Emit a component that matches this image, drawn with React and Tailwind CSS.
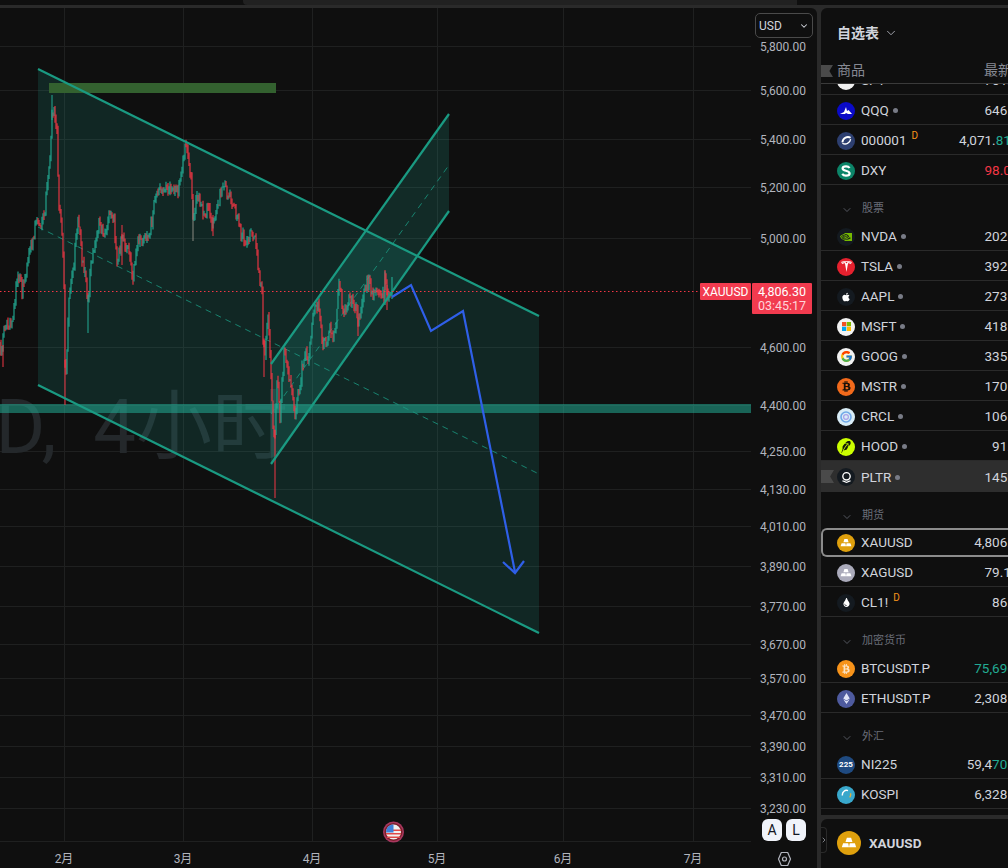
import React from "react";
import { ChevronDown, ChevronRight } from "lucide-react";
import { FaApple, FaBtc, FaEthereum, FaTint } from "react-icons/fa";
import { FcGoogle } from "react-icons/fc";
import { SiNvidia, SiPalantir, SiRobinhood, SiTesla } from "react-icons/si";

const priceTicks = [
  ["5,800.00", 46], ["5,600.00", 90], ["5,400.00", 139], ["5,200.00", 187], ["5,000.00", 238],
  ["4,600.00", 347], ["4,400.00", 405], ["4,250.00", 451], ["4,130.00", 489], ["4,010.00", 526],
  ["3,890.00", 566], ["3,770.00", 606], ["3,670.00", 644], ["3,570.00", 678], ["3,470.00", 715],
  ["3,390.00", 746], ["3,310.00", 777], ["3,230.00", 808],
];
const timeTicks = [["2月", 64], ["3月", 183], ["4月", 312], ["5月", 437], ["6月", 563], ["7月", 693]];

// price path read off the picture, in page pixels
const path = [
  [0, 350], [2, 345], [5, 327], [11, 320], [14, 306], [18, 273], [22, 290], [26, 280], [29, 250], [33, 243],
  [36, 217], [40, 223], [44, 220], [47, 190], [50, 163], [52, 117], [54, 103], [57, 133], [59, 207], [62, 230],
  [64, 283], [65.5, 395], [68, 317], [71, 277], [74, 260], [78, 220], [82, 257], [86, 283], [88, 300], [92, 257],
  [96, 237], [100, 223], [104, 232], [110, 213], [114, 223], [117, 267], [122, 233], [127, 247], [133, 277],
  [138, 243], [148, 237], [152, 220], [156, 193], [160, 193], [168, 190], [178, 193], [182, 173], [185, 140],
  [188, 157], [191, 173], [193, 223], [198, 193], [204, 217], [208, 207], [213, 227], [219, 200], [223, 183],
  [230, 197], [236, 213], [241, 233], [245, 240], [252, 233], [256, 243], [259, 277], [262, 293], [263, 340],
  [265, 350], [268, 313], [271, 380], [273, 423], [275, 440], [277, 380], [280, 413], [284, 353], [288, 370],
  [292, 397], [295, 413], [300, 383], [305, 352], [309, 357], [313, 320], [318, 300], [322, 343], [326, 340],
  [330, 330], [335, 337], [339, 280], [343, 313], [348, 300], [354, 303], [358, 317], [362, 305], [367, 280],
  [372, 293], [378, 290], [384, 297], [385, 274], [388, 300], [392, 287], [393, 293],
];
const spikes = [
  [52, 95, 120, "#22ab94"], [65, 360, 405, "#f23645"], [88, 295, 333, "#22ab94"], [275, 430, 498, "#f23645"],
  [122, 225, 265, "#f23645"], [193, 200, 241, "#8a8a80"], [213, 215, 236, "#f23645"], [3, 345, 367, "#f23645"],
  [264, 340, 377, "#f23645"], [358, 305, 336, "#f23645"], [387, 285, 310, "#f23645"], [385, 270, 290, "#f23645"],
];

const yAt = (x) => {
  for (let i = 1; i < path.length; i++) {
    if (x <= path[i][0]) {
      const [x0, y0] = path[i - 1];
      const [x1, y1] = path[i];
      return y0 + ((y1 - y0) * (x - x0)) / (x1 - x0);
    }
  }
  return path[path.length - 1][1];
};

const buildCandles = () => {
  let seed = 41;
  const rnd = () => {
    seed = (seed * 16807) % 2147483647;
    return seed / 2147483647;
  };
  const out = [];
  let open = yAt(0);
  for (let x = 0; x < 393; x += 1) {
    const close = yAt(x) + (rnd() - 0.5) * 12;
    const top = Math.min(open, close) - rnd() * 5;
    const bottom = Math.max(open, close) + rnd() * 5;
    out.push({ x, top, bottom, color: close < open ? "#22ab94" : "#f23645" });
    open = close;
  }
  return out;
};
const candles = buildCandles();

const Chart = () => (
  <svg width="817" height="860" viewBox="0 8 817 860" className="block">
    {priceTicks.map(([, y]) => (
      <line key={y} x1="0" x2="751" y1={y + 0.5} y2={y + 0.5} stroke="#1f2020" />
    ))}
    <line x1="0" x2="751" y1="841.5" y2="841.5" stroke="#1f2020" />
    {timeTicks.map(([, x]) => (
      <line key={x} x1={x + 0.5} x2={x + 0.5} y1="8" y2="841" stroke="#1f2020" />
    ))}
    <text x="288" y="453" textAnchor="end" fontSize="76" wordSpacing="18" fill="#24282b">XAUUSD, 4小时</text>

    <polygon points="38,69 539,316 539,633 38,385" fill="#22ab94" fillOpacity="0.16" />
    <polygon points="271,364 449,114 449,211 271,464" fill="#22ab94" fillOpacity="0.18" />
    <rect x="49" y="83" width="227" height="10" fill="#33612f" />
    <rect x="0" y="404" width="751" height="9" fill="#22ab94" fillOpacity="0.55" />

    <line x1="38" y1="227" x2="539" y2="474" stroke="#1a9a82" strokeDasharray="6 5" strokeOpacity="0.8" />
    <line x1="271" y1="414" x2="449" y2="165" stroke="#1a9a82" strokeDasharray="6 5" strokeOpacity="0.8" />

    {candles.map((c, i) => (
      <line key={i} x1={c.x} x2={c.x} y1={c.top} y2={c.bottom} stroke={c.color} strokeWidth="1.6" strokeOpacity="0.7" />
    ))}
    {spikes.map(([x, y1, y2, color], i) => (
      <line key={i} x1={x} x2={x} y1={y1} y2={y2} stroke={color} />
    ))}

    <line x1="38" y1="69" x2="539" y2="316" stroke="#1a9a82" strokeWidth="2.2" />
    <line x1="38" y1="385" x2="539" y2="633" stroke="#1a9a82" strokeWidth="2.2" />
    <line x1="271" y1="364" x2="449" y2="114" stroke="#1a9a82" strokeWidth="2.2" />
    <line x1="271" y1="464" x2="449" y2="211" stroke="#1a9a82" strokeWidth="2.2" />

    <line x1="0" x2="701" y1="291.5" y2="291.5" stroke="#f23645" strokeDasharray="1.5 2.5" />

    <polyline points="392,297 411,285 431,331 463,311 515,572" fill="none" stroke="#2f5fe8" strokeWidth="2.2" />
    <polyline points="503,562 515,573 524,561" fill="none" stroke="#2f5fe8" strokeWidth="2.2" />

    {priceTicks.map(([label, y]) => (
      <text key={label} x="760" y={y + 4.5} fontSize="12" fill="#b2b5be">{label}</text>
    ))}
    {timeTicks.map(([label, x]) => (
      <text key={label} x={x} y="863" fontSize="12" textAnchor="middle" fill="#b2b5be">{label}</text>
    ))}

    {/* event marker */}
    <circle cx="393.5" cy="832" r="10.5" fill="#a8375f" />
    <circle cx="393.5" cy="832" r="9" fill="#7a1f2a" />
    <circle cx="393.5" cy="832" r="7.5" fill="#f0f0f0" />
    <path d="M386 833h15v1.6h-15z M387 836.5h13v1.6h-13z M390 829.5h11v1.6h-11z" fill="#e04848" />
    <path d="M386.3 830a7.5 7.5 0 0 1 7.2-5.5v8h-7.5z" fill="#3f7fd8" />

    {/* settings */}
    <path d="M778.5 859l2.8-6.5h6.4l2.8 6.5-2.8 6.5h-6.4z" fill="none" stroke="#b2b5be" strokeWidth="1.2" strokeLinejoin="round" />
    <circle cx="784.5" cy="859" r="2" fill="none" stroke="#b2b5be" strokeWidth="1.2" />
  </svg>
);

const Disc = ({ bg, children }) => (
  <span className="flex h-[18px] w-[18px] shrink-0 items-center justify-center overflow-hidden rounded-full" style={{ background: bg }}>
    {children}
  </span>
);

const Bars = ({ size = 12 }) => (
  <svg width={size} height={size} viewBox="0 0 12 12" fill="#fff">
    <path d="M4.4 2h3.2l1 3.2H3.4z" />
    <path d="M1.6 6.2h3.8l.6 3H.6z" />
    <path d="M6.6 6.2h3.8l1 3H6z" />
  </svg>
);

const icons = {
  SPY: <Disc bg="#f0f0f0" />,
  QQQ: (
    <Disc bg="#0a0ac8">
      <svg width="12" height="10" viewBox="0 0 12 10" fill="#fff"><path d="M0 8l4-2 2-5 1 4 1.5-1L12 8H8L6 7 5 8z" /></svg>
    </Disc>
  ),
  "000001": (
    <Disc bg="#2d3f70">
      <svg width="11" height="11" viewBox="0 0 12 12" fill="none" stroke="#fff" strokeWidth="2"><path d="M1.5 8C2 3 7 1 10.5 3" /><path d="M10.5 4.5C10 9 5 11 1.5 9" strokeWidth="1.4" /></svg>
    </Disc>
  ),
  DXY: (
    <Disc bg="#0c8468">
      <svg width="10" height="12" viewBox="0 0 10 12" fill="none" stroke="#fff" strokeWidth="2.2"><path d="M8.6 3C7.8 1.8 6.5 1.4 5 1.4 3 1.4 1.6 2.2 1.6 3.6 1.6 6.4 8.6 5.2 8.6 8.4 8.6 9.8 7 10.6 5 10.6 3.4 10.6 2 10 1.2 8.8" /></svg>
    </Disc>
  ),
  NVDA: <Disc bg="#141a20"><SiNvidia size={12} color="#76b900" /></Disc>,
  TSLA: <Disc bg="#e6212e"><SiTesla size={11} color="#fff" /></Disc>,
  AAPL: <Disc bg="#141a20"><FaApple size={10} color="#fff" /></Disc>,
  MSFT: (
    <Disc bg="#f2f2f2">
      <svg width="9" height="9" viewBox="0 0 10 10">
        <rect width="4.7" height="4.7" fill="#f25022" />
        <rect x="5.3" width="4.7" height="4.7" fill="#7fba00" />
        <rect y="5.3" width="4.7" height="4.7" fill="#00a4ef" />
        <rect x="5.3" y="5.3" width="4.7" height="4.7" fill="#ffb900" />
      </svg>
    </Disc>
  ),
  GOOG: <Disc bg="#f2f2f2"><FcGoogle size={13} /></Disc>,
  MSTR: <Disc bg="#f26a1b"><FaBtc size={11} color="#1a1008" /></Disc>,
  CRCL: (
    <Disc bg="#d8ecf6">
      <svg width="14" height="14" viewBox="0 0 14 14" fill="none"><circle cx="7" cy="7" r="5" stroke="#6fa8e8" strokeWidth="1.6" /><circle cx="7" cy="7" r="2.4" stroke="#a9a0e8" strokeWidth="1.2" /></svg>
    </Disc>
  ),
  HOOD: <Disc bg="#ccff00"><SiRobinhood size={12} color="#12180a" /></Disc>,
  PLTR: <Disc bg="#141a20"><SiPalantir size={11} color="#fff" /></Disc>,
  XAUUSD: <Disc bg="#dfa00d"><Bars /></Disc>,
  XAGUSD: <Disc bg="#ababbb"><Bars /></Disc>,
  "CL1!": <Disc bg="#141a20"><FaTint size={9} color="#fff" /></Disc>,
  "BTCUSDT.P": <Disc bg="#f7931a"><FaBtc size={10} color="#fbe3c4" /></Disc>,
  "ETHUSDT.P": <Disc bg="#4e5a9e"><FaEthereum size={11} color="#dfe3f7" /></Disc>,
  NI225: <Disc bg="#1f4a80"><span className="text-[8px] font-bold leading-none text-white">225</span></Disc>,
  KOSPI: (
    <Disc bg="#39a8cc">
      <svg width="11" height="11" viewBox="0 0 11 11" fill="none" stroke="#fff" strokeWidth="1.4"><path d="M1.5 6.5A4.2 4.2 0 0 1 7 1.6" /><path d="M9.4 4.2a4.2 4.2 0 0 1-.8 4.2" stroke="#e0b040" /></svg>
    </Disc>
  ),
};

const sections = [
  {
    rows: [
      { s: "QQQ", dot: true, p: "646.31" },
      { s: "000001", d: true, p: "4,071.", g: "8120" },
      { s: "DXY", r: "98.071" },
    ],
  },
  {
    title: "股票",
    rows: [
      { s: "NVDA", dot: true, p: "202.49" },
      { s: "TSLA", dot: true, p: "392.51" },
      { s: "AAPL", dot: true, p: "273.05" },
      { s: "MSFT", dot: true, p: "418.07" },
      { s: "GOOG", dot: true, p: "335.40" },
      { s: "MSTR", dot: true, p: "170.22" },
      { s: "CRCL", dot: true, p: "106.18" },
      { s: "HOOD", dot: true, p: "91.36" },
      { s: "PLTR", dot: true, p: "145.63", active: true },
    ],
  },
  {
    title: "期货",
    rows: [
      { s: "XAUUSD", p: "4,806.30", selected: true },
      { s: "XAGUSD", p: "79.124" },
      { s: "CL1!", d: true, p: "86.27" },
    ],
  },
  {
    title: "加密货币",
    rows: [
      { s: "BTCUSDT.P", g: "75,696.4" },
      { s: "ETHUSDT.P", p: "2,308.21" },
    ],
  },
  {
    title: "外汇",
    rows: [
      { s: "NI225", p: "59,4", g: "70.00" },
      { s: "KOSPI", p: "6,328.14" },
    ],
  },
];

const Row = ({ row }) => {
  const box = row.selected
    ? "h-[29px] rounded-l-md border-2 border-r-0 border-[#8c8c8c]"
    : row.active
      ? "h-[31px] pt-px bg-[#2e2e2e]"
      : "h-[30px] pt-[2px] border-b border-[#2a2a2a]";
  return (
    <div className={`relative flex w-[205px] items-center ${box}`}>
      {row.active && <span className="absolute left-0 top-[9px] h-[13px] w-[13px] bg-[#4a4a4a] [clip-path:polygon(0_0,100%_0,70%_50%,100%_100%,0_100%)]" />}
      <span className={`flex items-center ${row.selected ? "pl-[14px]" : "pl-4"}`}>{icons[row.s]}</span>
      <span className="ml-[6px] flex flex-1 items-center text-[13.5px] text-[#d1d4dc]">
        {row.s}
        {row.dot && <span className="ml-[4px] h-[5px] w-[5px] rounded-full bg-[#787b86]" />}
        {row.d && <span className="ml-[5px] -mt-[10px] text-[10px] leading-none text-[#f7931a]">D</span>}
      </span>
      <span className="text-[13.5px] text-[#d1d4dc]">
        {row.p}
        {row.g && <span className="text-[#22ab94]">{row.g}</span>}
        {row.r && <span className="text-[#f23645]">{row.r}</span>}
      </span>
    </div>
  );
};

const Watchlist = () => (
  <div className="flex min-w-0 flex-1 flex-col overflow-hidden">
    <div className="flex h-[807px] flex-col overflow-hidden rounded-tl-md bg-[#0f0f0f]">
      <div className="flex h-[50px] items-center pl-4 text-[14px] font-bold text-[#d1d4dc]">
        自选表
        <ChevronDown size={14} strokeWidth={1.5} className="ml-[5px] text-[#b2b5be]" />
      </div>
      <div className="relative flex h-[26px] w-[205px] shrink-0 items-center justify-between border-b border-[#3a3a3a] pl-4 text-[14px] text-[#868993]">
        <span className="absolute left-0 top-[7px] h-[12px] w-[12px] bg-[#4a4a4a] [clip-path:polygon(0_0,100%_0,70%_50%,100%_100%,0_100%)]" />
        <span>商品</span>
        <span>最新价</span>
      </div>
      <div className="flex-1 overflow-hidden">
        <div className="-mt-[19px]">
          <Row row={{ s: "SPY", dot: true, p: "701.12" }} />
        </div>
        {sections.map((sec, i) => (
          <div key={i}>
            {sec.title && (
              <div className="flex h-9 items-center pl-[20px] pt-[13px] text-[11px] text-[#6a6d78]">
                <ChevronDown size={12} strokeWidth={1.5} className="mr-[9px]" />
                {sec.title}
              </div>
            )}
            {sec.rows.map((row) => (
              <Row key={row.s} row={row} />
            ))}
          </div>
        ))}
      </div>
    </div>
    <div className="mt-[4px] flex flex-1 items-start rounded-tl-md bg-[#0f0f0f]">
      <span className="mt-[8px] flex h-[26px] w-[6px] items-center justify-center rounded-r border border-l-0 border-[#2a2a2a] text-[#b2b5be]">
        <ChevronRight size={8} className="shrink-0" />
      </span>
      <span className="ml-[10px] mt-[12px] flex items-center gap-2 text-[13.5px] font-bold text-[#d1d4dc]">
        <span className="flex h-6 w-6 items-center justify-center rounded-full bg-[#dfa00d]">
          <Bars size={16} />
        </span>
        XAUUSD
      </span>
    </div>
  </div>
);

export default function App() {
  return (
    <div className="flex h-[868px] w-[1008px] flex-col overflow-hidden bg-[#2a2a2a] font-['Roboto','Noto_Sans_CJK_SC',sans-serif]">
      <div className="flex h-[5px] shrink-0 bg-[#0f0f0f]">
        <span className="w-[243px]" />
        <span className="w-[554px] rounded-bl bg-[#212121]" />
      </div>
      <div className="h-[3px] shrink-0" />
      <div className="flex flex-1 gap-1 overflow-hidden">
        <div className="relative w-[817px] shrink-0 overflow-hidden rounded-tr-md bg-[#0f0f0f]">
          <Chart />
          {/* overlays on the chart, offsets are relative to the pane (pane starts at y=8) */}
          <div className="absolute left-[755px] top-[5px] flex h-[25px] w-[58px] items-center justify-between rounded-[5px] border border-[#4a4a4a] bg-[#0f0f0f] pl-[3px] pr-[3px] text-[12px] text-[#d1d4dc]">
            USD
            <ChevronDown size={10} strokeWidth={2.5} />
          </div>
          <div className="absolute left-[700px] top-[275px] flex h-[17px] w-[51px] items-center justify-center rounded-[1px] bg-[#f23b4f] text-[12px] text-white">
            XAUUSD
          </div>
          <div className="absolute left-[752px] top-[275px] flex h-[31px] w-[60px] flex-col items-center justify-center rounded-[1px] bg-[#f23b4f] text-[12.5px] leading-[14px] text-white">
            <span>4,806.30</span>
            <span className="text-[#ffd5da]">03:45:17</span>
          </div>
          <div className="absolute left-[762px] top-[811px] flex gap-1">
            <span className="flex h-[22px] w-5 items-center justify-center rounded-md bg-[#f0f3fa] text-[14px] text-[#131722]">A</span>
            <span className="flex h-[22px] w-5 items-center justify-center rounded-md bg-[#f0f3fa] text-[14px] text-[#131722]">L</span>
          </div>
        </div>
        <Watchlist />
      </div>
    </div>
  );
}
